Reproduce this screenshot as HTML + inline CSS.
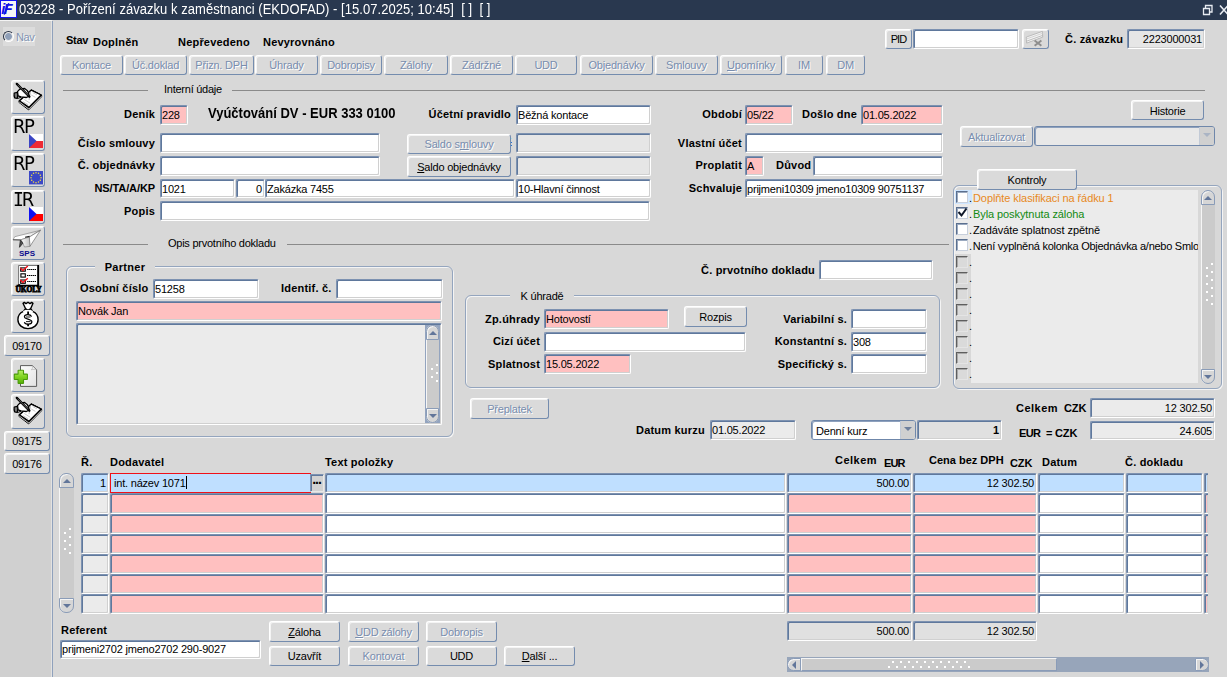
<!DOCTYPE html>
<html lang="cs"><head><meta charset="utf-8"><title>03228 - Pořízení závazku k zaměstnanci</title>
<style>
*{box-sizing:border-box}
html,body{margin:0;padding:0}
body{width:1227px;height:677px;overflow:hidden;background:#d8d8d8;font-family:"Liberation Sans",sans-serif;font-size:11px;color:#000;position:relative;letter-spacing:-0.2px}
body>div{position:absolute}
#tb{left:0;top:0;width:1227px;height:20px;background:#29384f}
#logo{position:absolute;left:0;top:0}
#tt{position:absolute;left:19px;top:2px;color:#fff;font-size:13px;line-height:16px;white-space:pre;letter-spacing:0.04px;transform:scaleY(1.1);transform-origin:0 13px}
#wc{position:absolute;right:0;top:3px}
#sb{left:0;top:20px;width:52px;height:657px;background:#d0d0d0;border-top:1px solid #f4f4f4}
#sbl{left:51px;top:21px;width:2px;height:656px;background:linear-gradient(90deg,#e2e2e2 50%,#8fa1bc 50%)}
#nav{left:3px;top:27px;width:32px;height:19px;background:#dcdcdc}
.radio{position:absolute;left:0;top:4px;width:11px;height:11px;border-radius:50%;background:radial-gradient(circle at 50% 50%,#8f9fb8 0 3px,#e8e8e8 3.8px);border:1px solid;border-color:#2a3446 #fff #fff #2a3446;transform:rotate(0deg)}
.navt{position:absolute;left:13px;top:3px;color:#8294b2;text-shadow:1px 1px 0 #fff;font-size:11px;line-height:14px;letter-spacing:-0.4px}
.l{font-weight:bold;line-height:14px;white-space:pre;letter-spacing:0.2px}
.l.n{font-weight:normal;letter-spacing:-0.25px}
.l.big13{font-size:13px;line-height:16px;letter-spacing:0;transform:scaleY(1.12);transform-origin:0 13px}
.l.sm{letter-spacing:-0.1px}
.l.wide{letter-spacing:0.5px}
.l.nar{letter-spacing:0}
.f{background:#fff;border:1px solid;border-color:#7d92b1 #fff #fff #7d92b1;border-radius:2px;padding:2px 2px 0 1px;line-height:15px;white-space:pre;overflow:hidden;box-shadow:inset 1px 1px 0 #5f789c,inset -1px -1px 0 #d0d0d0}
.f.r{text-align:right}
.f.p{background:#ffc0c0}
.f.g{background:#e6e6e6}
.f.g2{background:#ebebeb}
.f.g3{background:#e0e0e0}
.f.s{background:#bfdfff}
.f.cur{background:#bfdfff;border:1px solid #f01018;border-right:0;border-radius:0;box-shadow:none;padding:2px 3px 0 3px}
.f.clip{border-right:0;border-radius:2px 0 0 2px;padding:0}
.caret{display:inline-block;width:1px;height:13px;background:#000;vertical-align:-2px;margin-left:0}
.b{background:#dadada;border:1px solid;border-color:#fff #748cae #748cae #fff;border-radius:3px;text-align:center;white-space:pre;box-shadow:inset 1px 1px 0 #f4f4f4;overflow:hidden}
.b.d{color:#788dae;text-shadow:1px 1px 0 #fff}
.b.ib{padding:0;line-height:0}
.b.ib svg{position:absolute;left:0;top:0}
.b.ib .big{position:absolute;left:1px;top:1px;font-size:18px;line-height:17px;letter-spacing:-1.4px;font-family:"DejaVu Sans","Liberation Sans",sans-serif;transform:scaleY(1.11);transform-origin:0 15px}
.b.ib .ser{font-family:"DejaVu Sans Mono","Liberation Mono",monospace;letter-spacing:-2px}
.b.ib svg.flag{left:17px;top:17px}
.lov{background:#d2d2d2;border:1px solid;border-color:#7d92b1 #e8e8e8 #e8e8e8 #7d92b1;box-shadow:inset 1px 1px 0 #5f789c;font-weight:bold;font-size:14px;line-height:9px;letter-spacing:-1.1px;text-align:center;padding-left:0;text-indent:-1px;overflow:hidden}
.hl{height:1px;background:#8a8a8a;border-bottom:0}
.frame{border:1px solid #94a5be;border-radius:6px;box-shadow:1px 1px 0 #f4f4f4, inset 1px 1px 0 #f4f4f4}
.flab{background:#d8d8d8;text-align:center;line-height:14px;white-space:pre}
.flab b{letter-spacing:0.3px}
.lst{background:#ebebeb}
.cb{width:12px;height:12px;background:#fff;border:1px solid;border-color:#5a6f8f #c8d0dc #c8d0dc #5a6f8f;box-shadow:inset 1px 1px 0 #9aa9bf}
.cb svg{position:absolute;left:0;top:-1px}
.cb.e{background:#dadada;border-color:#5e5e5e #e4e4e4 #e4e4e4 #5e5e5e;box-shadow:inset 1px 1px 0 #a8a8a8}
.cbt{line-height:14px;white-space:pre;width:229px;overflow:hidden;letter-spacing:-0.08px}
.cbt .dot{color:#000;margin-right:1px}
.vs{background:#cbcbcb;border-left:1px solid #f6f6f6;border-radius:7px}
.vs .ar{position:absolute;left:-1px;right:0;height:15px;border:1px solid #8a9cb8;background:#d6d6d6;box-shadow:inset 1px 1px 0 #f4f4f4}
.vs .ar.up{top:0;border-radius:7px 7px 0 0}
.vs .ar.dn{bottom:0;border-radius:0 0 7px 7px}
.vs .ar.up:after{content:"";position:absolute;left:calc(50% - 4px);top:5px;border:4px solid transparent;border-top:0;border-bottom:4px solid #62769a}
.vs .ar.dn:after{content:"";position:absolute;left:calc(50% - 4px);top:5px;border:4px solid transparent;border-bottom:0;border-top:4px solid #62769a}
.vs .grip{position:absolute;left:3px;width:9px;background:radial-gradient(circle at 7px 2px,#fff 0 0.9px,transparent 1.3px) 0 0/9px 8px,radial-gradient(circle at 2px 6px,#fff 0 0.9px,transparent 1.3px) 0 0/9px 8px}
.vs.in{background:#cbcbcb}
.hs{background:#97a5ba;overflow:hidden}
.hs .thumb{position:absolute;top:1px;height:13px;background:#cbcbcb;border:1px solid;border-color:#f4f4f4 #8a9cb8 #8a9cb8 #f4f4f4}
.hs .har{position:absolute;top:1px;width:14px;height:13px;background:#d6d6d6;border:1px solid #8a9cb8;box-shadow:inset 1px 1px 0 #f4f4f4}
.hs .har.l{left:0;border-radius:7px 0 0 7px}
.hs .har.rr{right:0;border-radius:0 7px 7px 0}
.hs .har.l:after{content:"";position:absolute;left:4px;top:1.5px;border:4px solid transparent;border-left:0;border-right:4px solid #62769a}
.hs .har.rr:after{content:"";position:absolute;left:4px;top:1.5px;border:4px solid transparent;border-right:0;border-left:4px solid #62769a}
.hs .hgrip{position:absolute;top:3px;width:84px;height:9px;background:radial-gradient(circle at 6px 2px,#fff 0 0.9px,transparent 1.3px) 0 0/8px 9px,radial-gradient(circle at 2px 7px,#fff 0 0.9px,transparent 1.3px) 0 0/8px 9px}
.cmb{background:#fff;border:1px solid #6f87aa;border-radius:3px;box-shadow:inset 1px 1px 0 #8ea1bd;padding:3px 2px 0 4px;line-height:15px;white-space:pre;overflow:hidden}
.cmb.g{background:#e8e8e8}
.dd{position:absolute;right:0;top:0;width:15px;height:100%;background:#d0d0d0;border-left:1px solid #c2cad6}
.dd:after{content:"";position:absolute;left:3px;top:6px;border:4px solid transparent;border-bottom:0;border-top:4px solid #6d7f9c}
.dd.dis:after{border-top-color:#aab4c4}
</style></head>
<body>
<div id="tb"><svg id="logo" width="17" height="18" viewBox="0 0 17 18"><rect x="0.5" y="0.5" width="16" height="17" fill="#f6f6f6" stroke="#1414f0"/><text x="1.3" y="14.2" font-family="Liberation Sans, sans-serif" font-size="14.5" font-weight="bold" font-style="italic" fill="#1010e8" letter-spacing="-1.6">iF</text><path d="M4.2 14.5 L8.8 3.2" stroke="#1010e8" stroke-width="1.5"/></svg><span id="tt">03228 - Pořízení závazku k zaměstnanci (EKDOFAD) - [15.07.2025; 10:45]&nbsp; [ ]&nbsp; [ ]</span>
<svg id="wc" width="26" height="14" viewBox="0 0 26 14"><g fill="none" stroke="#e8ecf2" stroke-width="1.3"><path d="M2.5 5.5h6v6h-6z"/><path d="M4.5 5.5v-3h6.5v6.5h-2.5"/><path d="M19 2.5l8 9M27 2.5l-8 9" stroke-width="1.6"/></g></svg></div>
<div id="sb"></div><div id="sbl"></div>
<div id="nav"><span class="radio"></span><span class="navt">Nav</span></div>
<div class="b ib" style="left:11px;top:80px;width:34px;height:34px"><svg width="32" height="32" viewBox="0.4 0.3 32 32"><g stroke="#000" stroke-linejoin="round" stroke-linecap="round"><path d="M7.4 21.3 L7.6 19.8 L19.7 9.1 L30 14.3 L30 16 L17.3 28.9 Z" fill="#000" stroke-width="1"/><path d="M7.8 20.2 L19.7 9.4 L29.6 14.3 L17.4 26.6 Z" fill="#fff" stroke-width="1.3"/><path d="M8 21.6 L17.3 28.3 L29.7 15.8" fill="none" stroke="#fff" stroke-width="0.7"/><path d="M21.5 12 L25 14 M20 14.5 L23.5 16.5 M13 19 L18.5 22.5 M11.5 21 L16.5 24" stroke="#bdbdbd" stroke-width="0.8" fill="none"/><path d="M19 11.5 L17.5 19" stroke="#999" stroke-width="0.6" fill="none"/><path d="M2.6 12.3 Q2.2 15 3 17.2 L5.6 17.8 L6.3 14 L5.9 11.6 Z" fill="#777" stroke-width="1.2"/><path d="M5.9 10.9 L8.2 8.4 L13 7.8 L15.5 9.7 L17 12.4 L17.6 15.5 L14.7 16.8 L9.4 16.2 L6.5 15.1 Z" fill="#fff" stroke-width="1.3"/><path d="M6.3 17.7 L9 16.7" stroke-width="1" fill="none"/></g><path d="M5.2 3.2 L17.8 16" stroke="#000" stroke-width="2.3" stroke-linecap="round"/><path d="M6 4 L16.5 14.7" stroke="#9a9a9a" stroke-width="0.6"/></svg></div>
<div class="b ib" style="left:11px;top:116px;width:34px;height:35px"><span class="big">RP</span><svg class="flag" width="14" height="14" viewBox="0 0 14 14"><rect width="14" height="7" fill="#fff"/><rect y="7" width="14" height="7" fill="#ee2a35"/><path d="M0 0L7.5 7L0 14Z" fill="#3a45c4"/></svg></div>
<div class="b ib" style="left:11px;top:153px;width:34px;height:34px"><span class="big">RP</span><svg class="flag" width="14" height="14" viewBox="0 0 14 14"><rect width="14" height="13.4" fill="#3c48c6"/><circle cx="7.00" cy="1.70" r="0.75" fill="#f7e03c"/><circle cx="9.50" cy="2.37" r="0.75" fill="#f7e03c"/><circle cx="11.33" cy="4.20" r="0.75" fill="#f7e03c"/><circle cx="12.00" cy="6.70" r="0.75" fill="#f7e03c"/><circle cx="11.33" cy="9.20" r="0.75" fill="#f7e03c"/><circle cx="9.50" cy="11.03" r="0.75" fill="#f7e03c"/><circle cx="7.00" cy="11.70" r="0.75" fill="#f7e03c"/><circle cx="4.50" cy="11.03" r="0.75" fill="#f7e03c"/><circle cx="2.67" cy="9.20" r="0.75" fill="#f7e03c"/><circle cx="2.00" cy="6.70" r="0.75" fill="#f7e03c"/><circle cx="2.67" cy="4.20" r="0.75" fill="#f7e03c"/><circle cx="4.50" cy="2.37" r="0.75" fill="#f7e03c"/></svg></div>
<div class="b ib" style="left:11px;top:190px;width:34px;height:34px"><span class="big" style="top:0"><span class="ser">I</span>R</span><svg class="flag" style="top:16px" width="14" height="14" viewBox="0 0 14 14"><rect width="14" height="7" fill="#fff"/><rect y="7" width="14" height="7" fill="#ff0000"/><path d="M0 0L7.5 7L0 14Z" fill="#1010f0"/></svg></div>
<div class="b ib" style="left:11px;top:226px;width:34px;height:34px"><svg width="32" height="32" viewBox="1 1 32 32"><defs><linearGradient id="sg1" x1="0" y1="0" x2="0" y2="1"><stop offset="0" stop-color="#c8c8c8"/><stop offset="0.6" stop-color="#ffffff"/></linearGradient><linearGradient id="sg2" x1="0" y1="0" x2="1" y2="0"><stop offset="0" stop-color="#ffffff"/><stop offset="1" stop-color="#c4c4c4"/></linearGradient></defs><g stroke-linejoin="round"><path d="M2 13.6 L3.8 10.7 L29.5 4.2 L18.3 11 L9.4 13.9 Z" fill="url(#sg1)" stroke="#8c8c8c" stroke-width="0.7"/><path d="M29.5 4.2 L18.9 20.4 L18.3 11 Z" fill="#fff" stroke="#6e6e6e" stroke-width="0.7"/><path d="M18.3 11 L18.9 20.4 L13.5 21 L10.9 15.1 L9.4 13.9 Z" fill="url(#sg2)" stroke="#777" stroke-width="0.6"/><path d="M9.4 13.9 L8.5 21.3 L11.8 17.2 Z" fill="#555" stroke="#222" stroke-width="0.8"/><path d="M2 13.8 L9.4 14" stroke="#444" stroke-width="0.9" fill="none"/><path d="M14 11.3 L18.6 10.4" stroke="#222" stroke-width="1.1" fill="none"/></g><text x="16.1" y="30" text-anchor="middle" font-family="Liberation Sans, sans-serif" font-size="8" font-weight="bold" fill="#0a0a8c" letter-spacing="0.1">SPS</text></svg></div>
<div class="b ib" style="left:11px;top:262px;width:34px;height:34px"><svg width="32" height="32" viewBox="1 1 32 32"><rect x="7.6" y="3.5" width="19" height="19.5" fill="#fff"/><path d="M7.6 23 V3.5 H26.5" stroke="#555" stroke-width="0.8" fill="none"/><rect x="26.2" y="3" width="1.9" height="20.6" fill="#000"/><path d="M6.2 24.3 V23.4 H28.1" stroke="#000" stroke-width="1.4" fill="none"/><g fill="#fff" stroke="#000" stroke-width="1.1"><rect x="9.7" y="5.9" width="4.6" height="3.3"/><rect x="9.9" y="11.8" width="4.4" height="3.3"/><rect x="9.7" y="18" width="4.6" height="3.3"/></g><g stroke="#000" stroke-width="1" stroke-dasharray="1.4 0.5"><path d="M16.2 7.5 H25"/><path d="M16 13.5 H25"/><path d="M16.2 19.5 H25"/></g><g stroke="#f01018" stroke-width="1.4" fill="none" stroke-linejoin="round"><path d="M9.3 6 L11.9 8.4 L16.8 4"/><path d="M9.3 18.1 L11.9 20.5 L16.8 16.2"/></g><text x="17.6" y="29.8" text-anchor="middle" font-family="Liberation Serif, serif" font-weight="bold" font-size="7.4" fill="#000" stroke="#000" stroke-width="0.75" textLength="26" lengthAdjust="spacingAndGlyphs">ÚKOLY</text></svg></div>
<div class="b ib" style="left:11px;top:299px;width:34px;height:34px"><svg width="32" height="32" viewBox="1 1 32 32"><g stroke="#000" stroke-width="1.4" fill="#fff" stroke-linejoin="round"><path d="M12 4.3 L13.3 3.4 L15 4.6 L17 3.2 L19 4.6 L20.7 3.4 L22 4.3 L19.6 9.8 L21.6 12.3 C25.5 14 27.2 17.5 27.1 20.8 C27 26 22.5 29.6 17 29.6 C11.5 29.6 7 26 6.9 20.8 C6.8 17.5 8.5 14 12.4 12.3 L14.6 9.8 Z"/></g><path d="M14.3 9.5 L17 11.2 L19.8 9.5" stroke="#000" stroke-width="1.2" fill="none"/><path d="M12.2 12.6 C14 11.6 20 11.6 21.8 12.6" stroke="#fff" stroke-width="1.6" fill="none"/><g fill="none" stroke="#000" stroke-width="1.15"><path d="M20.6 17.6 C19.6 14.8 13.5 15 13.4 17.8 C13.3 20.6 20.9 19.6 20.9 22.8 C20.9 26 14.2 25.6 13.3 23.2"/><path d="M15 18 H19.5 M15 22.6 H19.5" stroke-width="0.9"/><path d="M17.1 12.6 V15.4 M17.1 25 V27.2" stroke-width="1.8"/></g></svg></div>
<div class="b" style="left:4px;top:335px;width:46px;height:21px;line-height:19px;padding-top:1px;">09170</div>
<div class="b ib" style="left:11px;top:358px;width:34px;height:34px"><svg width="32" height="32" viewBox="1 1 32 32"><defs><linearGradient id="pg" x1="0" y1="0" x2="1" y2="1"><stop offset="0" stop-color="#fdfdfd"/><stop offset="1" stop-color="#e2e2e2"/></linearGradient><linearGradient id="gg" x1="0" y1="0" x2="0" y2="1"><stop offset="0" stop-color="#b4ee62"/><stop offset="0.5" stop-color="#7fd321"/><stop offset="1" stop-color="#58b208"/></linearGradient></defs><path d="M9.5 7.6 H21.5 L25.6 11.6 V28.4 H9.5 Z" fill="url(#pg)" stroke="#5c5c5c" stroke-width="1"/><path d="M21.3 7.8 C21.8 10 21.3 11 20.3 11.8 C22.3 11.2 24 11.2 25.4 11.8 Z" fill="#f4f4f4" stroke="#aaa" stroke-width="0.6"/><path d="M7.6 12.3 H12 Q12.5 12.3 12.5 12.8 V16.1 H15.9 Q16.4 16.1 16.4 16.6 V21 Q16.4 21.5 15.9 21.5 H12.5 V24.9 Q12.5 25.4 12 25.4 H7.6 Q7.1 25.4 7.1 24.9 V21.5 H3.8 Q3.3 21.5 3.3 21 V16.6 Q3.3 16.1 3.8 16.1 H7.1 V12.8 Q7.1 12.3 7.6 12.3 Z" fill="url(#gg)" stroke="#4a9a0a" stroke-width="1.1" stroke-linejoin="round"/></svg></div>
<div class="b ib" style="left:11px;top:394px;width:34px;height:35px"><svg width="32" height="32" viewBox="0.4 0.3 32 32"><g stroke="#000" stroke-linejoin="round" stroke-linecap="round"><path d="M7.4 21.3 L7.6 19.8 L19.7 9.1 L30 14.3 L30 16 L17.3 28.9 Z" fill="#000" stroke-width="1"/><path d="M7.8 20.2 L19.7 9.4 L29.6 14.3 L17.4 26.6 Z" fill="#fff" stroke-width="1.3"/><path d="M8 21.6 L17.3 28.3 L29.7 15.8" fill="none" stroke="#fff" stroke-width="0.7"/><path d="M21.5 12 L25 14 M20 14.5 L23.5 16.5 M13 19 L18.5 22.5 M11.5 21 L16.5 24" stroke="#bdbdbd" stroke-width="0.8" fill="none"/><path d="M19 11.5 L17.5 19" stroke="#999" stroke-width="0.6" fill="none"/><path d="M2.6 12.3 Q2.2 15 3 17.2 L5.6 17.8 L6.3 14 L5.9 11.6 Z" fill="#777" stroke-width="1.2"/><path d="M5.9 10.9 L8.2 8.4 L13 7.8 L15.5 9.7 L17 12.4 L17.6 15.5 L14.7 16.8 L9.4 16.2 L6.5 15.1 Z" fill="#fff" stroke-width="1.3"/><path d="M6.3 17.7 L9 16.7" stroke-width="1" fill="none"/></g><path d="M5.2 3.2 L17.8 16" stroke="#000" stroke-width="2.3" stroke-linecap="round"/><path d="M6 4 L16.5 14.7" stroke="#9a9a9a" stroke-width="0.6"/></svg></div>
<div class="b" style="left:4px;top:431px;width:46px;height:20px;line-height:18px;">09175</div>
<div class="b" style="left:4px;top:453px;width:46px;height:21px;line-height:19px;padding-top:1px;">09176</div>
<div class="l" style="left:66px;top:33px;letter-spacing:-0.3px">Stav</div>
<div class="l" style="left:93px;top:35px;">Doplněn</div>
<div class="l" style="left:178px;top:35px;">Nepřevedeno</div>
<div class="l" style="left:263px;top:35px;">Nevyrovnáno</div>
<div class="b" style="left:885px;top:29px;width:27px;height:20px;line-height:18px;"><span style="letter-spacing:-0.9px">PID</span></div>
<div class="f" style="left:913px;top:29px;width:106px;height:20px;"></div>
<div class="b ib" style="left:1022px;top:29px;width:27px;height:20px"><svg width="25" height="18" viewBox="1 1 25 18"><path d="M4.3 8.1 L20.4 2.4 L20.7 8.1 L4.6 14.1 Z" fill="#f4f4f4" stroke="#b0b0b0" stroke-width="0.8"/><path d="M4.4 10 L20.5 4.3" stroke="#cfcfcf" stroke-width="0.9"/><path d="M4.5 12.2 L20.6 6.4" stroke="#b8b8b8" stroke-width="0.9"/><path d="M12.6 11.4 L19.4 16.8 M19.4 11.4 L12.6 16.8" stroke="#8e8e8e" stroke-width="1.9"/></svg></div>
<div class="l" style="left:1065px;top:32px;">Č. závazku</div>
<div class="f g r" style="left:1127px;top:29px;width:78px;height:20px;">2223000031</div>
<div class="b d" style="left:60px;top:55px;width:63px;height:20px;line-height:18px;">Kontace</div>
<div class="b d" style="left:124px;top:55px;width:63px;height:20px;line-height:18px;">Úč.doklad</div>
<div class="b d" style="left:189px;top:55px;width:65px;height:20px;line-height:18px;">Přizn. DPH</div>
<div class="b d" style="left:255px;top:55px;width:63px;height:20px;line-height:18px;">Úhrady</div>
<div class="b d" style="left:320px;top:55px;width:62px;height:20px;line-height:18px;">Dobropisy</div>
<div class="b d" style="left:384px;top:55px;width:64px;height:20px;line-height:18px;">Zálohy</div>
<div class="b d" style="left:450px;top:55px;width:63px;height:20px;line-height:18px;">Zádržné</div>
<div class="b d" style="left:515px;top:55px;width:62px;height:20px;line-height:18px;">UDD</div>
<div class="b d" style="left:580px;top:55px;width:73px;height:20px;line-height:18px;">Objednávky</div>
<div class="b d" style="left:655px;top:55px;width:63px;height:20px;line-height:18px;">Smlouvy</div>
<div class="b d" style="left:720px;top:55px;width:62px;height:20px;line-height:18px;"><u>U</u>pomínky</div>
<div class="b d" style="left:785px;top:55px;width:38px;height:20px;line-height:18px;">IM</div>
<div class="b d" style="left:826px;top:55px;width:39px;height:20px;line-height:18px;">DM</div>
<div class="hl" style="left:63px;top:90px;width:85px"></div>
<div class="hl" style="left:232px;top:90px;width:973px"></div>
<div class="l n" style="left:164px;top:82px;">Interní údaje</div>
<div class="hl" style="left:63px;top:244px;width:85px"></div>
<div class="hl" style="left:287px;top:244px;width:662px"></div>
<div class="l n" style="left:168px;top:236px;">Opis prvotního dokladu</div>
<div class="l" style="right:1072px;top:107px;">Deník</div>
<div class="f p" style="left:160px;top:105px;width:28px;height:20px;">228</div>
<div class="l big13" style="left:208px;top:106px;">Vyúčtování DV - EUR 333 0100</div>
<div class="l" style="right:716px;top:107px;">Účetní pravidlo</div>
<div class="f" style="left:516px;top:105px;width:135px;height:20px;">Běžná kontace</div>
<div class="l" style="right:485px;top:107px;">Období</div>
<div class="f p" style="left:745px;top:105px;width:48px;height:20px;">05/22</div>
<div class="l" style="left:802px;top:107px;">Došlo dne</div>
<div class="f p" style="left:861px;top:105px;width:82px;height:20px;">01.05.2022</div>
<div class="b" style="left:1131px;top:100px;width:73px;height:20px;line-height:18px;padding-top:1px;">Historie</div>
<div class="l" style="right:1072px;top:136px;">Číslo smlouvy</div>
<div class="f" style="left:160px;top:133px;width:220px;height:20px;"></div>
<div class="b d" style="left:407px;top:134px;width:104px;height:20px;line-height:18px;">Saldo s<u>m</u>louvy</div>
<div style="left:511px;top:138px;width:1px;height:1px;background:#9fe0e8"></div><div style="left:511px;top:142px;width:1px;height:1px;background:#2a74d0"></div><div style="left:511px;top:145px;width:1px;height:1px;background:#2a74d0"></div>
<div class="f g" style="left:516px;top:133px;width:135px;height:20px;"></div>
<div class="l" style="right:485px;top:136px;">Vlastní účet</div>
<div class="f" style="left:745px;top:133px;width:198px;height:20px;"></div>
<div class="b d" style="left:960px;top:126px;width:73px;height:21px;line-height:19px;padding-top:1px;">Aktualizovat</div>
<div class="cmb g" style="left:1034px;top:126px;width:181px;height:20px"><span class="dd dis"></span></div>
<div class="l" style="right:1072px;top:158px;">Č. objednávky</div>
<div class="f" style="left:160px;top:156px;width:220px;height:20px;"></div>
<div class="b" style="left:407px;top:156px;width:104px;height:21px;line-height:19px;padding-top:1px;"><u>S</u>aldo objednávky</div>
<div class="f g" style="left:516px;top:156px;width:135px;height:20px;"></div>
<div class="l" style="right:485px;top:158px;">Proplatit</div>
<div class="f p" style="left:745px;top:156px;width:19px;height:20px;">A</div>
<div class="l" style="left:776px;top:158px;">Důvod</div>
<div class="f" style="left:813px;top:156px;width:130px;height:20px;"></div>
<div class="l sm" style="right:1072px;top:181px;">NS/TA/A/KP</div>
<div class="f" style="left:160px;top:179px;width:75px;height:19px;">1021</div>
<div class="f  r" style="left:236px;top:179px;width:29px;height:19px;">0</div>
<div class="f" style="left:265px;top:179px;width:250px;height:19px;">Zakázka 7455</div>
<div class="f" style="left:516px;top:179px;width:135px;height:19px;">10-Hlavní činnost</div>
<div class="l" style="right:485px;top:181px;">Schvaluje</div>
<div class="f" style="left:745px;top:179px;width:198px;height:19px;">prijmeni10309 jmeno10309 90751137</div>
<div class="l" style="right:1072px;top:204px;">Popis</div>
<div class="f" style="left:160px;top:201px;width:490px;height:20px;"></div>
<div class="frame" style="left:953px;top:185px;width:269px;height:204px"></div>
<div class="lst" style="left:955px;top:190px;width:243px;height:193px"></div>
<div class="b" style="left:977px;top:169px;width:100px;height:21px;line-height:19px;padding-top:1px;">Kontroly</div>
<div style="left:955px;top:190px;width:17px;height:14px;background:#cfe6ff"></div>
<div style="left:955px;top:254px;width:16px;height:129px;background:#d8d8d8"></div>
<div class="cb" style="left:956px;top:191px"></div>
<div class="cbt" style="left:969px;top:191px;color:#e8891c"><span class="dot">.</span>Doplňte klasifikaci na řádku 1</div>
<div class="cb" style="left:956px;top:207px"><svg width="11" height="11" viewBox="0 0 11 11"><path d="M1.5 5 L4.5 8.5 L9.5 1.5" fill="none" stroke="#101828" stroke-width="2"/></svg></div>
<div class="cbt" style="left:969px;top:207px;color:#128a12"><span class="dot">.</span>Byla poskytnuta záloha</div>
<div class="cb" style="left:956px;top:223px"></div>
<div class="cbt" style="left:969px;top:223px;color:#000"><span class="dot">.</span>Zadáváte splatnost zpětně</div>
<div class="cb" style="left:956px;top:239px"></div>
<div class="cbt" style="left:969px;top:239px;color:#000;letter-spacing:-0.27px"><span class="dot">.</span>Není vyplněná kolonka Objednávka a/nebo Smlo</div>
<div class="cb e" style="left:956px;top:256px"></div>
<div class="cbt" style="left:969px;top:255px;color:#666"><span class="dot">.</span></div>
<div class="cb e" style="left:956px;top:272px"></div>
<div class="cbt" style="left:969px;top:271px;color:#666"><span class="dot">.</span></div>
<div class="cb e" style="left:956px;top:288px"></div>
<div class="cbt" style="left:969px;top:287px;color:#666"><span class="dot">.</span></div>
<div class="cb e" style="left:956px;top:304px"></div>
<div class="cbt" style="left:969px;top:303px;color:#666"><span class="dot">.</span></div>
<div class="cb e" style="left:956px;top:320px"></div>
<div class="cbt" style="left:969px;top:319px;color:#666"><span class="dot">.</span></div>
<div class="cb e" style="left:956px;top:336px"></div>
<div class="cbt" style="left:969px;top:335px;color:#666"><span class="dot">.</span></div>
<div class="cb e" style="left:956px;top:352px"></div>
<div class="cbt" style="left:969px;top:351px;color:#666"><span class="dot">.</span></div>
<div class="cb e" style="left:956px;top:368px"></div>
<div class="cbt" style="left:969px;top:367px;color:#666"><span class="dot">.</span></div>
<div class="vs " style="left:1201px;top:190px;width:14px;height:194px"><span class="ar up"></span><span class="ar dn"></span><span class="grip" style="top:72px;height:44px"></span></div>
<div class="frame" style="left:66px;top:266px;width:387px;height:171px"></div>
<div class="flab" style="left:95px;top:260px;width:60px"><b>Partner</b></div>
<div class="l" style="left:80px;top:281px;">Osobní číslo</div>
<div class="f" style="left:153px;top:279px;width:106px;height:20px;">51258</div>
<div class="l" style="left:281px;top:281px;">Identif. č.</div>
<div class="f" style="left:336px;top:279px;width:107px;height:20px;"></div>
<div class="f p" style="left:76px;top:301px;width:366px;height:20px;">Novák Jan</div>
<div class="f g2" style="left:76px;top:323px;width:366px;height:102px"></div>
<div style="left:425px;top:325px;width:15px;height:98px;background:#93a4bf"></div>
<div class="vs in" style="left:426px;top:325px;width:13px;height:98px"><span class="ar up"></span><span class="ar dn"></span><span class="grip" style="top:38px;height:20px"></span></div>
<div class="l" style="left:701px;top:263px;">Č. prvotního dokladu</div>
<div class="f" style="left:819px;top:260px;width:114px;height:20px;"></div>
<div class="frame" style="left:465px;top:295px;width:475px;height:93px"></div>
<div class="flab" style="left:510px;top:289px;width:64px">K úhradě</div>
<div class="l" style="right:687px;top:312px;">Zp.úhrady</div>
<div class="f p" style="left:544px;top:309px;width:125px;height:20px;">Hotovostí</div>
<div class="b" style="left:684px;top:306px;width:63px;height:21px;line-height:19px;padding-top:1px;">Rozpis</div>
<div class="l" style="right:380px;top:312px;">Variabilní s.</div>
<div class="f" style="left:851px;top:309px;width:76px;height:20px;"></div>
<div class="l" style="right:687px;top:334px;">Cizí účet</div>
<div class="f" style="left:544px;top:332px;width:202px;height:20px;"></div>
<div class="l" style="right:380px;top:334px;">Konstantní s.</div>
<div class="f" style="left:851px;top:332px;width:76px;height:20px;">308</div>
<div class="l" style="right:687px;top:357px;">Splatnost</div>
<div class="f p" style="left:544px;top:354px;width:87px;height:20px;">15.05.2022</div>
<div class="l" style="right:380px;top:357px;">Specifický s.</div>
<div class="f" style="left:851px;top:354px;width:76px;height:20px;"></div>
<div class="b d" style="left:470px;top:398px;width:79px;height:21px;line-height:19px;padding-top:1px;">Přeplatek</div>
<div class="l" style="left:636px;top:423px;">Datum kurzu</div>
<div class="f g2" style="left:710px;top:420px;width:86px;height:20px;">01.05.2022</div>
<div class="cmb" style="left:811px;top:420px;width:105px;height:20px">Denní kurz<span class="dd"></span></div>
<div class="f g3 r" style="left:917px;top:420px;width:85px;height:20px;"><b>1</b></div>
<div class="l wide" style="left:1016px;top:401px;">Celkem</div>
<div class="l sm" style="left:1064px;top:401px;">CZK</div>
<div class="f g2 r" style="left:1090px;top:398px;width:125px;height:20px;">12 302.50</div>
<div class="l sm" style="left:1019px;top:426px;letter-spacing:-0.7px">EUR</div>
<div class="l sm" style="left:1046px;top:426px;">=</div>
<div class="l sm" style="left:1055px;top:426px;">CZK</div>
<div class="f g2 r" style="left:1090px;top:421px;width:125px;height:19px;">24.605</div>
<div class="l" style="left:81px;top:455px;">Ř.</div>
<div class="l" style="left:110px;top:455px;">Dodavatel</div>
<div class="l" style="left:325px;top:455px;">Text položky</div>
<div class="l wide" style="left:835px;top:453px;">Celkem</div>
<div class="l sm" style="left:884px;top:456px;letter-spacing:-0.9px">EUR</div>
<div class="l nar" style="left:929px;top:453px;">Cena bez DPH</div>
<div class="l sm" style="left:1010px;top:456px;">CZK</div>
<div class="l" style="left:1042px;top:455px;">Datum</div>
<div class="l" style="left:1125px;top:455px;">Č. dokladu</div>
<div class="f s r" style="left:81px;top:473px;width:28px;height:20px;">1</div>
<div class="f cur" style="left:110px;top:473px;width:201px;height:20px">int. název 1071<span class="caret"></span></div>
<div class="lov" style="left:310px;top:474px;width:14px;height:18px">...</div>
<div class="f s" style="left:325px;top:473px;width:461px;height:20px;"></div>
<div class="f s r" style="left:787px;top:473px;width:125px;height:20px;">500.00</div>
<div class="f s r" style="left:913px;top:473px;width:124px;height:20px;">12 302.50</div>
<div class="f s" style="left:1038px;top:473px;width:87px;height:20px;"></div>
<div class="f s" style="left:1126px;top:473px;width:77px;height:20px;"></div>
<div class="f s clip" style="left:1204px;top:473px;width:4px;height:20px"></div>
<div class="f g2" style="left:81px;top:493px;width:28px;height:21px;"></div>
<div class="f p" style="left:110px;top:493px;width:214px;height:21px;"></div>
<div class="f" style="left:325px;top:493px;width:461px;height:21px;"></div>
<div class="f p" style="left:787px;top:493px;width:125px;height:21px;"></div>
<div class="f p" style="left:913px;top:493px;width:124px;height:21px;"></div>
<div class="f" style="left:1038px;top:493px;width:87px;height:21px;"></div>
<div class="f" style="left:1126px;top:493px;width:77px;height:21px;"></div>
<div class="f p clip" style="left:1204px;top:493px;width:4px;height:21px"></div>
<div class="f g2" style="left:81px;top:514px;width:28px;height:20px;"></div>
<div class="f p" style="left:110px;top:514px;width:214px;height:20px;"></div>
<div class="f" style="left:325px;top:514px;width:461px;height:20px;"></div>
<div class="f p" style="left:787px;top:514px;width:125px;height:20px;"></div>
<div class="f p" style="left:913px;top:514px;width:124px;height:20px;"></div>
<div class="f" style="left:1038px;top:514px;width:87px;height:20px;"></div>
<div class="f" style="left:1126px;top:514px;width:77px;height:20px;"></div>
<div class="f p clip" style="left:1204px;top:514px;width:4px;height:20px"></div>
<div class="f g2" style="left:81px;top:534px;width:28px;height:20px;"></div>
<div class="f p" style="left:110px;top:534px;width:214px;height:20px;"></div>
<div class="f" style="left:325px;top:534px;width:461px;height:20px;"></div>
<div class="f p" style="left:787px;top:534px;width:125px;height:20px;"></div>
<div class="f p" style="left:913px;top:534px;width:124px;height:20px;"></div>
<div class="f" style="left:1038px;top:534px;width:87px;height:20px;"></div>
<div class="f" style="left:1126px;top:534px;width:77px;height:20px;"></div>
<div class="f p clip" style="left:1204px;top:534px;width:4px;height:20px"></div>
<div class="f g2" style="left:81px;top:554px;width:28px;height:20px;"></div>
<div class="f p" style="left:110px;top:554px;width:214px;height:20px;"></div>
<div class="f" style="left:325px;top:554px;width:461px;height:20px;"></div>
<div class="f p" style="left:787px;top:554px;width:125px;height:20px;"></div>
<div class="f p" style="left:913px;top:554px;width:124px;height:20px;"></div>
<div class="f" style="left:1038px;top:554px;width:87px;height:20px;"></div>
<div class="f" style="left:1126px;top:554px;width:77px;height:20px;"></div>
<div class="f p clip" style="left:1204px;top:554px;width:4px;height:20px"></div>
<div class="f g2" style="left:81px;top:574px;width:28px;height:20px;"></div>
<div class="f p" style="left:110px;top:574px;width:214px;height:20px;"></div>
<div class="f" style="left:325px;top:574px;width:461px;height:20px;"></div>
<div class="f p" style="left:787px;top:574px;width:125px;height:20px;"></div>
<div class="f p" style="left:913px;top:574px;width:124px;height:20px;"></div>
<div class="f" style="left:1038px;top:574px;width:87px;height:20px;"></div>
<div class="f" style="left:1126px;top:574px;width:77px;height:20px;"></div>
<div class="f p clip" style="left:1204px;top:574px;width:4px;height:20px"></div>
<div class="f g2" style="left:81px;top:594px;width:28px;height:20px;"></div>
<div class="f p" style="left:110px;top:594px;width:214px;height:20px;"></div>
<div class="f" style="left:325px;top:594px;width:461px;height:20px;"></div>
<div class="f p" style="left:787px;top:594px;width:125px;height:20px;"></div>
<div class="f p" style="left:913px;top:594px;width:124px;height:20px;"></div>
<div class="f" style="left:1038px;top:594px;width:87px;height:20px;"></div>
<div class="f" style="left:1126px;top:594px;width:77px;height:20px;"></div>
<div class="f p clip" style="left:1204px;top:594px;width:4px;height:20px"></div>
<div class="vs " style="left:59px;top:473px;width:15px;height:140px"><span class="ar up"></span><span class="ar dn"></span><span class="grip" style="top:54px;height:28px"></span></div>
<div class="l" style="left:61px;top:623px;">Referent</div>
<div class="f" style="left:60px;top:640px;width:201px;height:19px;padding-top:1px">prijmeni2702 jmeno2702 290-9027</div>
<div class="b" style="left:269px;top:621px;width:71px;height:21px;line-height:19px;padding-top:1px;"><u>Z</u>áloha</div>
<div class="b" style="left:269px;top:646px;width:71px;height:20px;line-height:18px;">Uzavřít</div>
<div class="b d" style="left:348px;top:621px;width:71px;height:21px;line-height:19px;padding-top:1px;"><u>U</u>DD zálohy</div>
<div class="b d" style="left:348px;top:646px;width:71px;height:20px;line-height:18px;">Kontovat</div>
<div class="b d" style="left:426px;top:621px;width:71px;height:21px;line-height:19px;padding-top:1px;">Dobropis</div>
<div class="b" style="left:426px;top:646px;width:71px;height:20px;line-height:18px;">UDD</div>
<div class="b" style="left:504px;top:646px;width:71px;height:20px;line-height:18px;"><u>D</u>alší ...</div>
<div class="f g3 r" style="left:787px;top:621px;width:125px;height:20px;">500.00</div>
<div class="f g3 r" style="left:913px;top:621px;width:124px;height:20px;">12 302.50</div>
<div class="hs" style="left:787px;top:657px;width:422px;height:15px"><span class="har l"></span><span class="thumb" style="left:14px;width:256px"></span><span class="hgrip" style="left:100px"></span><span class="har rr"></span></div>
</body></html>
